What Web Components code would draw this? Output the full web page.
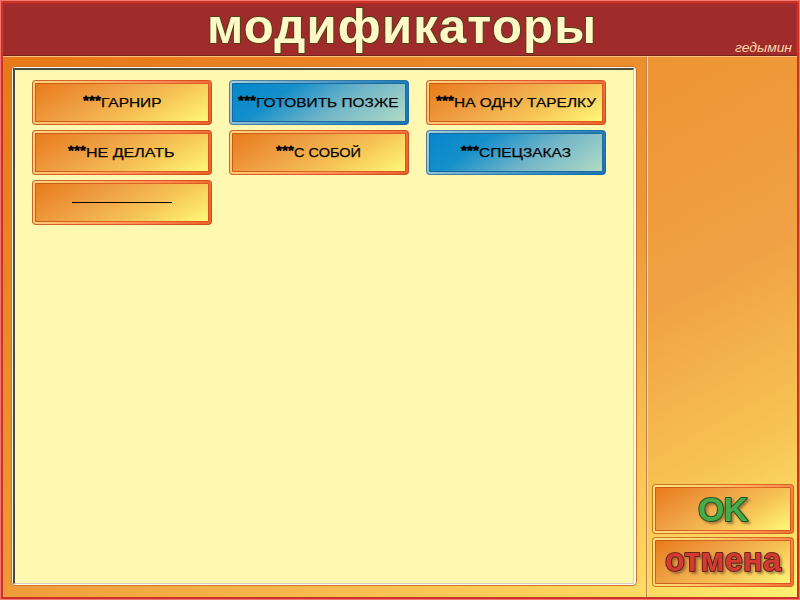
<!DOCTYPE html>
<html lang="ru"><head><meta charset="utf-8"><title>Модификаторы</title>
<style>html,body{margin:0;width:800px;height:600px;overflow:hidden}body{font-family:"Liberation Sans",Arial,sans-serif}</style></head>
<body><pos-window></pos-window>
<script>
class PosLabel extends HTMLElement{
 connectedCallback(){
  const a=n=>this.getAttribute(n);
  this.attachShadow({mode:'open'}).innerHTML=`<style>:host{display:block;pointer-events:none}svg{display:block;overflow:visible}text{font-family:"Liberation Sans",Arial,sans-serif;paint-order:stroke;stroke-linejoin:round}</style>
  <svg width="${a('w')}" height="${a('h')}"><text x="${a('x')||0}" y="${a('base')}" textLength="${a('len')}" lengthAdjust="${a('adjust')||'spacing'}"></text></svg>`;
  const t=this.shadowRoot.querySelector('text');
  t.textContent=a('text');t.style.cssText=a('look');
 }
}
customElements.define('pos-label',PosLabel);

class PosButton extends HTMLElement{
 connectedCallback(){
  this.attachShadow({mode:'open'}).innerHTML=`<style>
  :host{display:block;box-sizing:border-box;width:180px;height:45px;padding:1px;border-radius:4px;
   --edge:linear-gradient(125deg,#c7682c,#df5529 55%,#c8501d);--rim:linear-gradient(115deg,#ffd580,#ffbd65 25%,#ff874f 68%,#ec6027);
   --inner:linear-gradient(125deg,#c45b18,#e0662a 60%,#d65422);--face:linear-gradient(151deg,#e97b1b,#efa044 36%,#f6c355 65%,#fff878);background:var(--edge)}
  :host([tone=blue]){--edge:linear-gradient(125deg,#587f9b,#3478a7 60%,#176cab);--rim:linear-gradient(115deg,#a7d0e0,#75b1d1 25%,#348fc7 65%,#1873b5);
   --inner:linear-gradient(125deg,#14669b,#286b9b);--face:linear-gradient(145deg,#0587cc,#148fca 28%,#6fb4c8 60%,#b0dbc5)}
  :host([large]){width:142px;height:50px;--edge:linear-gradient(125deg,#c87927,#d96528 55%,#cf6323);--rim:linear-gradient(120deg,#ffe27d,#ffd36d 35%,#ff9a50 70%,#ef7330)}
  .rim{box-sizing:border-box;height:100%;padding:2px;border-radius:3px;background:var(--rim)}
  .inner{box-sizing:border-box;height:100%;padding:1px;background:var(--inner);border-radius:1px}
  .face{display:flow-root;height:100%;background:var(--face)}
  </style><div class="rim"><div class="inner"><div class="face"><slot></slot></div></div></div>`;
 }
}
customElements.define('pos-button',PosButton);

class PosWindow extends HTMLElement{
 connectedCallback(){
  const items=[['ГАРНИР',47,63.5,''],['ГОТОВИТЬ ПОЗЖЕ',5,145.5,'blue'],['НА ОДНУ ТАРЕЛКУ',6,145,''],['НЕ ДЕЛАТЬ',32,91.5,''],['С СОБОЙ',43,70,''],['СПЕЦЗАКАЗ',31,95,'blue'],['',36,100,'']];
  const small='font-size:13.6px;fill:#050505;stroke:#050505;stroke-width:.25px';
  const cell=([t,x,w,tone])=>`<pos-button tone="${tone}">${t
   ?`<div class="caption" style="padding-left:${x}px"><pos-label w="17" h="37" base="21" len="18" text="***" look="font-size:13px;fill:#050505;stroke:#050505;stroke-width:.8px" adjust="spacingAndGlyphs"></pos-label><pos-label w="${w-3}" h="37" base="22.5" len="${w-3}" adjust="spacingAndGlyphs" text="${t}" look="${small}"></pos-label></div>`
   :'<div class="rule"></div>'}</pos-button>`;
  this.attachShadow({mode:'open'}).innerHTML=`<style>
  :host{display:grid;box-sizing:border-box;width:800px;height:600px;grid-template-rows:53px 1fr;border:1px solid #f47770;padding:2px;background:#cc3328}
  header{background:#9f2b2a;border-left:1px solid #b52c27;border-right:1px solid #b52c27;border-top:1px solid #b52c27;border-bottom:1px solid #71241b;box-sizing:border-box;display:grid;grid-template-columns:1fr 61px}
  .title{padding-left:203px}
  main{display:grid;grid-template-columns:644px 1fr;border-top:1px solid #ffc17b;background:linear-gradient(151deg,#e87819 0%,#ee9636 40%,#f0a143 62%,#f7c354 82%,#fff272 100%);min-height:0}
  .left{box-sizing:border-box;padding:9px 9px 11px 8px;border-right:1px solid #bd8451;background:linear-gradient(151deg,#e87818,#ee9837 58%,#ffdc65)}
  .panel{box-sizing:border-box;height:100%;border:1px solid #cf742b;border-radius:4px;background:#fffbe1;padding:1px 2px 1px 1px}
  .sheet{box-sizing:border-box;height:100%;background:#fff8b0;border-top:2px solid #4b4942;border-left:2px solid #4b4942;border-right:1px solid #d2cfc5;border-bottom:1px solid #d2cfc5;padding:10px 0 0 17px}
  .items{display:grid;grid-template-columns:repeat(3,180px);gap:5px 17px}
  .caption{display:flex;gap:1px}.rule{width:100px;height:1px;background:#050505;margin:18px 0 0 36px}
  aside{border-left:1px solid #ffdb94;padding:0 3px 10px 4px;display:flex;flex-direction:column;justify-content:flex-end;gap:3px}
  </style>
  <header><pos-label class="title" w="390" h="51" base="38.5" len="389" text="модификаторы" look="font-size:49px;font-weight:bold;fill:#fff8c7;stroke:#554118;stroke-width:2px"></pos-label>
  <pos-label w="60" h="51" base="48" len="57" text="гедымин" look="font-size:13.5px;font-style:italic;fill:#ffd6aa" adjust="spacingAndGlyphs"></pos-label></header>
  <main><section class="left"><div class="panel"><div class="sheet"><div class="items">${items.map(cell).join('')}</div></div></div></section>
  <aside><pos-button large><pos-label w="134" h="42" x="42" base="33" len="50" text="OK" look="font-size:34px;font-weight:bold;fill:#49aa49;stroke:#205522;stroke-width:2px;filter:drop-shadow(2px 2px 1px #74502d99)"></pos-label></pos-button>
  <pos-button large><pos-label w="134" h="42" x="9" base="30" len="116" text="отмена" look="font-size:32.5px;font-weight:bold;fill:#d43a32;stroke:#67251c;stroke-width:2px;filter:drop-shadow(2px 2px 1px #74502d99)"></pos-label></pos-button></aside></main>`;
 }
}
customElements.define('pos-window',PosWindow);
</script></body></html>
